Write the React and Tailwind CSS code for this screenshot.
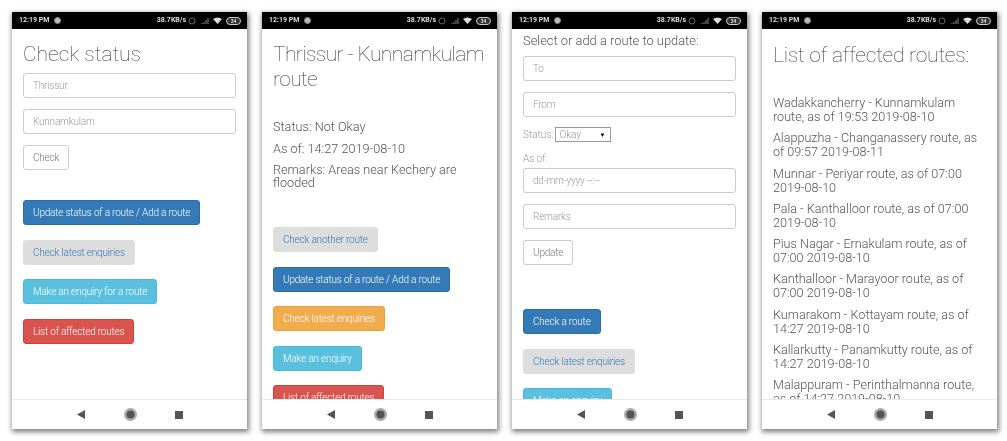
import React from "react";

function Status() {
  return (
    <div className="h-[17px] shrink-0 bg-black flex items-center justify-between pl-[7px] pr-[6px] text-[#ddd] text-[7px] font-bold">
      <div className="flex items-center gap-[5px]">
        <span>12:19 PM</span>
        <span className="w-[7px] h-[7px] rounded-full bg-[#bbb] border border-[#888]" />
      </div>
      <div className="flex items-center gap-[2px]">
        <span>38.7KB/s</span>
        <svg width="8" height="8" viewBox="0 0 8 8"><circle cx="4" cy="4" r="3" fill="none" stroke="#666" strokeWidth="1"/></svg>
        <svg width="9" height="7" viewBox="0 0 9 7" className="ml-[2px]"><path d="M2 7V6M4 7V5M6 7V3M8 7V1" stroke="#888" strokeWidth="1"/></svg>
        <svg width="9" height="7" viewBox="0 0 9 7" className="ml-[2px]"><path d="M0 2Q4.5 -1 9 2L4.5 7Z" fill="#ddd"/></svg>
        <span className="w-[15px] h-[8px] ml-[2px] rounded-full bg-[#333] border border-[#ccc] text-[#ddd] text-[5px] leading-[6px] text-center">34</span>
      </div>
    </div>
  );
}

function Nav() {
  return (
    <div className="h-[30px] shrink-0 bg-white border-t border-[#e8e8e8] flex items-center justify-center">
      <svg width="8" height="9" viewBox="0 0 8 9"><path d="M8 0V9L0 4.5Z" fill="#555"/></svg>
      <svg width="13" height="13" viewBox="0 0 13 13" className="ml-[39px] mr-[38px]"><circle cx="6.5" cy="6.5" r="6.5" fill="#aaa"/><circle cx="6.5" cy="6.5" r="4" fill="#555"/></svg>
      <span className="w-[8px] h-[8px] bg-[#555]" />
    </div>
  );
}

function Phone({ children }) {
  return (
    <div className="w-[235px] h-[417px] flex flex-col bg-white shadow-[1px_2px_5px_1px_rgba(0,0,0,0.5)]">
      <Status />
      <div className="flex-1 min-h-0 overflow-hidden px-[11px]">{children}</div>
      <Nav />
    </div>
  );
}

function Btn({ c, children, className = "" }) {
  return (
    <div className={"h-[25px] w-fit shrink-0 rounded-[3px] border px-[9px] flex items-center text-[10px] tracking-[-0.2px] whitespace-nowrap " + c + " " + className}>{children}</div>
  );
}

const blue = "bg-[#337ab7] border-[#2e6da4] text-white";
const gray = "bg-[#dddddd] border-[#dddddd] text-[#337ab7]";
const orange = "bg-[#f0ad4e] border-[#eea236] text-white";
const info = "bg-[#5bc0de] border-[#46b8da] text-white";
const red = "bg-[#d9534f] border-[#d43f3a] text-white";
const plain = "bg-white border-[#cccccc] text-[#777]";

function Input({ children, className = "" }) {
  return (
    <div className={"h-[25px] rounded-[3px] border border-[#cccccc] px-[9px] flex items-center text-[10px] tracking-[-0.2px] text-[#999] " + className}>{children}</div>
  );
}

const routes = [
  ["Wadakkancherry - Kunnamkulam", "route, as of 19:53 2019-08-10"],
  ["Alappuzha - Changanassery route, as", "of 09:57 2019-08-11"],
  ["Munnar - Periyar route, as of 07:00", "2019-08-10"],
  ["Pala - Kanthalloor route, as of 07:00", "2019-08-10"],
  ["Pius Nagar - Ernakulam route, as of", "07:00 2019-08-10"],
  ["Kanthalloor - Marayoor route, as of", "07:00 2019-08-10"],
  ["Kumarakom - Kottayam route, as of", "14:27 2019-08-10"],
  ["Kallarkutty - Panamkutty route, as of", "14:27 2019-08-10"],
  ["Malappuram - Perinthalmanna route,", "as of 14:27 2019-08-10"],
];

const headline = "text-[21px] font-thin text-[#333]";

export default function App() {
  return (
    <div className="w-[1007px] h-[441px] bg-white overflow-hidden flex gap-[15px] pl-[12px] pt-[12px] text-[#555] font-light blur-[0.3px]" style={{fontFamily:'"Roboto", sans-serif'}}>
      <Phone>
        <h1 className={headline + " leading-[26px] mt-[12px] mb-[6px]"}>Check status</h1>
        <Input className="mb-[11px]">Thrissur</Input>
        <Input className="mb-[11px]">Kunnamkulam</Input>
        <Btn c={plain} className="mb-[30px]">Check</Btn>
        <div className="flex flex-col gap-[14.5px]">
          <Btn c={blue}>Update status of a route / Add a route</Btn>
          <Btn c={gray}>Check latest enquiries</Btn>
          <Btn c={info}>Make an enquiry for a route</Btn>
          <Btn c={red}>List of affected routes</Btn>
        </div>
      </Phone>
      <Phone>
        <h1 className={headline + " tracking-[-0.6px] leading-[25px] mt-[13px] mb-[28px]"}>Thrissur - Kunnamkulam route</h1>
        <div className="text-[12.7px] leading-[13px] flex flex-col gap-[8.5px] mb-[38px]">
          <p>Status: Not Okay</p>
          <p>As of: 14:27 2019-08-10</p>
          <p>Remarks: Areas near Kechery are flooded</p>
        </div>
        <div className="flex flex-col gap-[14.5px]">
          <Btn c={gray}>Check another route</Btn>
          <Btn c={blue}>Update status of a route / Add a route</Btn>
          <Btn c={orange}>Check latest enquiries</Btn>
          <Btn c={info}>Make an enquiry</Btn>
          <Btn c={red}>List of affected routes</Btn>
        </div>
      </Phone>
      <Phone>
        <p className="text-[12.9px] leading-[14px] mt-[5px] mb-[8px]">Select or add a route to update:</p>
        <Input className="mb-[11px]">To</Input>
        <Input className="mb-[10px]">From</Input>
        <div className="flex items-center gap-[2px] text-[10px] text-[#999] mb-[11px]">
          <span>Status:</span>
          <span className="w-[56px] h-[15px] border border-[#999] flex items-center justify-between pl-[3px] pr-[5px]">Okay<span className="text-[6px] text-black">▼</span></span>
        </div>
        <div className="text-[10px] leading-[12px] text-[#999] mb-[3px]">As of:</div>
        <Input className="mb-[11px]">dd-mm-yyyy --:--</Input>
        <Input className="mb-[11px]">Remarks</Input>
        <Btn c={plain} className="mb-[44px]">Update</Btn>
        <div className="flex flex-col gap-[14.5px]">
          <Btn c={blue}>Check a route</Btn>
          <Btn c={gray}>Check latest enquiries</Btn>
          <Btn c={info}>Make an enquiry</Btn>
        </div>
      </Phone>
      <Phone>
        <h1 className={headline + " tracking-[-0.2px] leading-[26px] mt-[13px] mb-[28px]"}>List of affected routes:</h1>
        <div className="text-[12.6px] leading-[14px] flex flex-col gap-[7.3px]">
          {routes.map((r) => (
            <p key={r[0]}>{r[0]}<br />{r[1]}</p>
          ))}
        </div>
      </Phone>
    </div>
  );
}
